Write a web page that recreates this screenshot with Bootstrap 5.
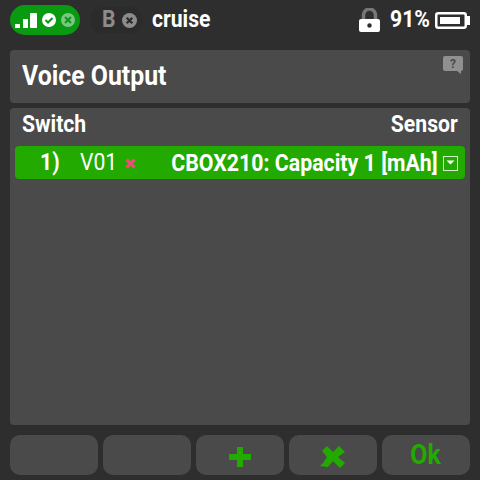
<!DOCTYPE html>
<html lang="en">
<head>
  <meta charset="UTF-8" />
  <title>Voice Output</title>
  <meta name="viewport" content="width=device-width, initial-scale=1" />
  <link href="https://cdn.jsdelivr.net/npm/bootstrap@5.3.3/dist/css/bootstrap.min.css" rel="stylesheet" />
  <style>
    html, body { height: 100%; }
    body {
      background-color: #2e2e2e;
      color: #fff;
      font-family: Roboto, sans-serif;
      font-weight: 500;
      overflow: hidden;
    }
    /* the radio font is narrower than Roboto, squeeze the labels */
    .narrow { display: inline-block; transform: scaleX(.92); transform-origin: left center; white-space: nowrap; }
    .narrow-end { display: inline-block; transform: scaleX(.92); transform-origin: right center; white-space: nowrap; }
    .screen { width: 480px; height: 480px; padding: 0 10px 5px; }
    .top-bar { height: 50px; padding-bottom: 10px; }
    .link-pill {
      width: 70px; height: 30px;
      background: #0a9a12; border-radius: 15px;
      padding-left: 5px;
    }
    .link-pill svg { margin-right: 5px; }
    .rx-pill {
      width: 52px; height: 26px; margin-left: 10px;
      background: #2b2b2b; border-radius: 13px;
      padding-left: 12px;
      color: #8c8c8c; font-size: 23px; font-weight: 700;
    }
    .rx-letter { width: 20px; }
    .model-name { margin-left: 10px; font-size: 23px; font-weight: 700; line-height: 30px; }
    .batt-text { width: 37px; margin: 0 8px 0 10px; font-size: 23px; font-weight: 700; line-height: 30px; }
    .title-panel {
      position: relative; height: 53px;
      background: #4a4a4a; border-radius: 4px;
      padding-left: 12px;
      font-size: 27px; font-weight: 700; line-height: 53px;
    }
    .help-icon { position: absolute; right: 7px; top: 6px; }
    .list-panel {
      height: 317px; margin-top: 5px; padding: 0 5px;
      background: #4a4a4a; border-radius: 4px;
    }
    .list-head {
      height: 38px; padding: 0 7px;
      font-size: 23px; font-weight: 700; line-height: 34px;
    }
    .voice-row {
      height: 33px; padding: 1px 7px 0 25px;
      background: #22aa00; border-radius: 4px;
      font-size: 23px; line-height: 32px;
    }
    .row-num { width: 40px; font-weight: 700; }
    .row-name { width: 45px; font-weight: 400; }
    .row-sensor { margin-left: auto; font-size: 23.2px; font-weight: 700; }
    .drop-box { margin-left: 5px; }
    .foot-bar { margin-top: 10px; gap: 5px; }
    .foot-btn {
      flex: 1 1 0; height: 40px;
      background: #4a4a4a; border-radius: 10px;
      color: #22aa00; font-size: 27px; font-weight: 700; line-height: 38px;
    }
    .foot-btn .narrow { transform-origin: center; }
  </style>
</head>
<body>
  <div class="screen">
    <!-- top bar -->
    <div class="top-bar d-flex align-items-center">
      <div class="link-pill d-flex align-items-center">
        <svg width="22" height="15" viewBox="0 0 22 15"><rect x="0" y="11" width="5" height="4" fill="#fff"/><rect x="8" y="6" width="5" height="9" fill="#fff"/><rect x="15" y="0" width="7" height="15" rx="1" fill="#fff"/></svg>
        <svg width="14" height="14" viewBox="0 0 14 14"><circle cx="7" cy="7" r="7" fill="#fff"/><path d="M3.500 7l2.500 2.500 4.500-4.500" fill="none" stroke="#0a9a12" stroke-width="2"/></svg>
        <svg width="14" height="14" viewBox="0 0 14 14"><circle cx="7" cy="7" r="7" fill="#7cc686"/><path d="M4 4l6 6M10 4l-6 6" stroke="#0a9a12" stroke-width="2"/></svg>
      </div>
      <div class="rx-pill d-flex align-items-center">
        <span class="rx-letter narrow">B</span>
        <svg width="15" height="15" viewBox="0 0 16 16"><circle cx="8" cy="8" r="8" fill="#8c8c8c"/><path d="M5 5l6 6M11 5l-6 6" stroke="#2b2b2b" stroke-width="2.400"/></svg>
      </div>
      <div class="model-name narrow">cruise</div>
      <div class="ms-auto d-flex align-items-center">
        <svg width="21" height="24" viewBox="0 0 21 24"><path d="M4.500 11V7a6 6 0 0 1 12 0v4" fill="none" stroke="#777" stroke-width="3.500"/><rect x="0" y="11" width="21" height="13" rx="2" fill="#fff"/><circle cx="10.500" cy="17.500" r="2.200" fill="#2e2e2e"/></svg>
        <span class="batt-text narrow">91%</span>
        <svg width="35" height="17" viewBox="0 0 35 17"><rect x="1.250" y="1.250" width="29.500" height="14.500" rx="2" fill="none" stroke="#fff" stroke-width="2.500"/><rect x="5" y="5" width="20" height="7" fill="#fff"/><rect x="32" y="4" width="3" height="9" fill="#fff"/></svg>
      </div>
    </div>

    <!-- title -->
    <div class="title-panel">
      <span class="narrow">Voice Output</span>
      <svg class="help-icon" width="20" height="18" viewBox="0 0 20 18"><path d="M2 0h16a2 2 0 0 1 2 2v11a2 2 0 0 1-2 2v3l-4-3H2a2 2 0 0 1-2-2V2a2 2 0 0 1 2-2z" fill="#909090"/><text x="10" y="12" text-anchor="middle" font-size="12" font-weight="700" fill="#4a4a4a" font-family="Roboto, sans-serif">?</text></svg>
    </div>

    <!-- list -->
    <div class="list-panel">
      <div class="list-head d-flex justify-content-between">
        <span class="narrow">Switch</span>
        <span class="narrow-end">Sensor</span>
      </div>
      <div class="voice-row d-flex align-items-center">
        <span class="row-num narrow">1)</span>
        <span class="row-name narrow">V01</span>
        <svg width="11" height="11" viewBox="0 0 11 11"><path d="M1.500 1.500l8 8M9.500 1.500l-8 8" stroke="#f04a78" stroke-width="3.200"/></svg>
        <span class="row-sensor narrow-end">CBOX210: Capacity 1 [mAh]</span>
        <svg class="drop-box" width="15" height="15" viewBox="0 0 15 15"><rect x=".5" y=".5" width="14" height="14" fill="none" stroke="#d4eccc" stroke-width="1"/><path d="M3.500 4.500h8l-4 4z" fill="#fff"/></svg>
      </div>
    </div>

    <!-- footer buttons -->
    <div class="foot-bar d-flex">
      <div class="foot-btn"></div>
      <div class="foot-btn"></div>
      <div class="foot-btn d-flex align-items-center justify-content-center">
        <svg width="22" height="20" viewBox="0 0 22 20" class="mt-1"><path d="M8 0h6v7h8v6h-8v7H8v-7H0V7h8z" fill="#22aa00"/></svg>
      </div>
      <div class="foot-btn d-flex align-items-center justify-content-center">
        <svg width="26" height="22" viewBox="0 0 26 22" class="mt-1"><path d="M7 0l6 6 6-6 6 6-7 5 7 6-5 5-7-7-5 6-8-1 3-3 4-6-5-6z" fill="#22aa00"/></svg>
      </div>
      <div class="foot-btn d-flex align-items-center justify-content-center"><span class="narrow">Ok</span></div>
    </div>
  </div>

  <script src="https://cdn.jsdelivr.net/npm/bootstrap@5.3.3/dist/js/bootstrap.bundle.min.js"></script>
</body>
</html>
